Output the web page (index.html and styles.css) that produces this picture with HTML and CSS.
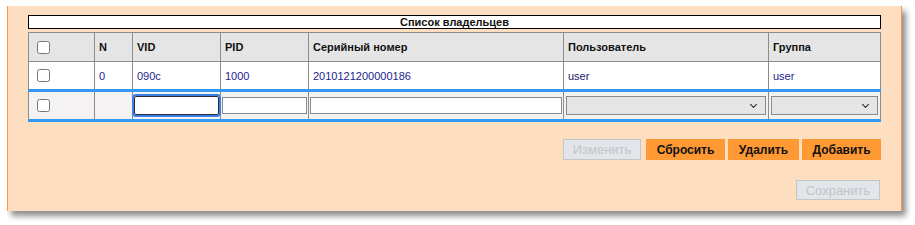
FILE: index.html
```html
<!DOCTYPE html>
<html lang="ru">
<head>
    <meta charset="UTF-8">
    <title>Список владельцев</title>
    <link rel="stylesheet" href="styles.css">
</head>
<body>
    <div class="panel">
        <div class="caption">Список владельцев</div>
        <table class="owners">
            <colgroup>
                <col style="width: 66px">
                <col style="width: 38px">
                <col style="width: 88px">
                <col style="width: 88px">
                <col style="width: 255px">
                <col style="width: 205px">
                <col>
            </colgroup>
            <thead>
                <tr>
                    <th><input type="checkbox"></th>
                    <th>N</th>
                    <th>VID</th>
                    <th>PID</th>
                    <th>Серийный номер</th>
                    <th>Пользователь</th>
                    <th>Группа</th>
                </tr>
            </thead>
            <tbody>
                <tr class="row">
                    <td><input type="checkbox"></td>
                    <td>0</td>
                    <td>090c</td>
                    <td>1000</td>
                    <td>2010121200000186</td>
                    <td class="plain">user</td>
                    <td>user</td>
                </tr>
                <tr class="edit">
                    <td><input type="checkbox"></td>
                    <td></td>
                    <td><input type="text" class="fld focus" value=""></td>
                    <td><input type="text" class="fld" value=""></td>
                    <td><input type="text" class="fld" value=""></td>
                    <td><div class="sel"><span class="arr"></span></div></td>
                    <td><div class="sel"><span class="arr"></span></div></td>
                </tr>
            </tbody>
        </table>

        <div class="actions">
            <button class="btn off" disabled>Изменить</button>
            <button class="btn">Сбросить</button>
            <button class="btn narrow">Удалить</button>
            <button class="btn">Добавить</button>
        </div>
        <div class="actions save">
            <button class="btn off wide" disabled>Сохранить</button>
        </div>
    </div>
</body>
</html>
```

FILE: styles.css
```css
html {
    background: #fff;
}

body {
    margin: 6px 0 0 7px;
    padding-bottom: 14px;
    font-family: 'Liberation Sans', Arial, sans-serif;
    font-size: 11px;
}

.panel {
    position: relative;
    width: 853px;
    height: 196px;
    padding: 9px 20px 0 20px;
    background: #fddec0;
    border-left: 1px solid #f7993a;
    border-right: 1px solid #f7993a;
    box-shadow: 4px 5px 6px rgba(0,0,0,0.45);
}

.caption {
    height: 12px;
    line-height: 12px;
    border: 1px solid #000;
    background: #fff;
    text-align: center;
    font-weight: bold;
    color: #111;
}

.owners {
    width: 853px;
    margin-top: 3px;
    border-collapse: collapse;
    table-layout: fixed;
}

.owners th,
.owners td {
    border: 1px solid #8c8c8c;
    padding: 0 4px;
    text-align: left;
    vertical-align: middle;
}

.owners th {
    height: 28px;
    background: #e5e5e5;
    font-weight: bold;
    color: #111;
}

.owners input[type="checkbox"] {
    margin: 3px 3px 3px 4px;
    width: 13px;
    height: 13px;
    vertical-align: middle;
}

.row td {
    height: 27px;
    background: #fff;
    color: #1d1d8b;
    border-bottom: 3px solid #3399f3;
}

.row td.plain {
    color: #20206e;
}

.edit td {
    height: 27px;
    background: #f4f2f2;
    border-bottom: 3px solid #3399f3;
    padding: 0 1px;
}

.edit td:first-child {
    padding: 0 4px;
}

.fld {
    box-sizing: border-box;
    width: 100%;
    height: 17px;
    margin: 0;
    padding: 0 3px;
    border: 1px solid #8a8a8a;
    background: #fff;
    display: block;
    font: 11px 'Liberation Sans', Arial, sans-serif;
}

.fld.focus {
    height: 19px;
    border: 1px solid #2a2a3a;
    outline: 2px solid #3b7fe0;
    outline-offset: 0;
    border-radius: 2px;
}

.sel {
    box-sizing: border-box;
    position: relative;
    height: 19px;
    margin: 0 1px;
    border: 1px solid #8a8a8a;
    background: #e5e5e5;
}

.arr {
    position: absolute;
    right: 9px;
    top: 5px;
    width: 4px;
    height: 4px;
    border-right: 1.5px solid #222;
    border-bottom: 1.5px solid #222;
    transform: rotate(45deg);
}

.actions {
    display: flex;
    justify-content: flex-end;
    gap: 3px;
    margin-top: 17px;
}

.actions.save {
    margin-top: 20px;
    padding-right: 1px;
}

.btn {
    box-sizing: border-box;
    width: 79px;
    height: 21px;
    margin: 0;
    padding: 0;
    border: none;
    background: #fe9933;
    color: #111;
    font: bold 12px 'Liberation Sans', Arial, sans-serif;
}

.btn.narrow {
    width: 71px;
}

.btn.off {
    width: 78px;
    margin-right: 2px;
    background: #e2e5ea;
    border: 1px solid #c6c6c6;
    color: #c2c4c8;
    font-weight: normal;
    font-size: 13px;
}

.btn.wide {
    width: 84px;
    height: 20px;
    margin-right: 0;
}
```
